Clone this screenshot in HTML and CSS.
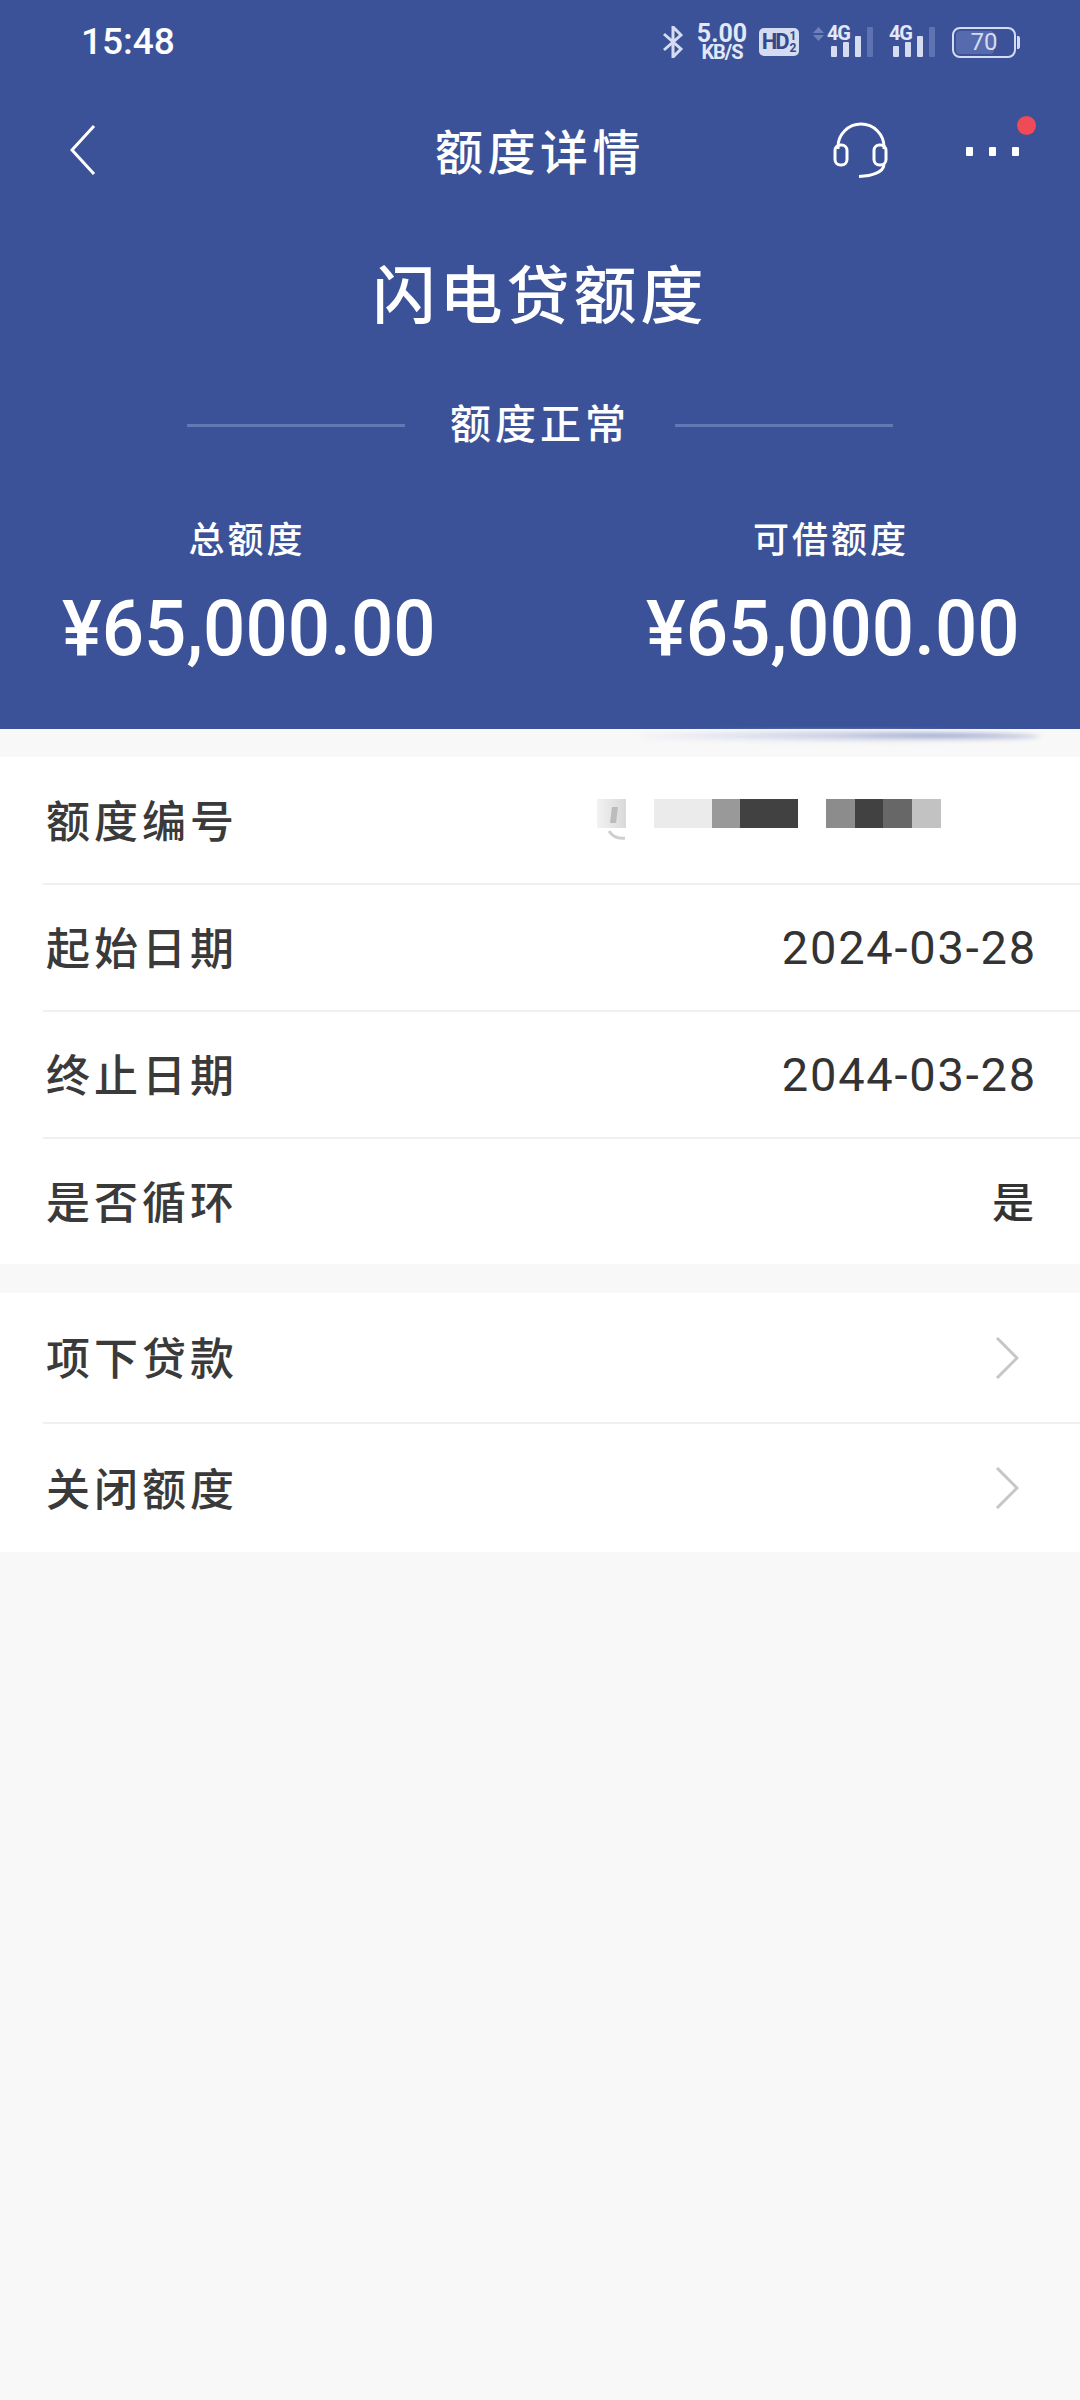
FILE: index.html
```html
<!DOCTYPE html>
<html lang="zh-CN">
<head>
<meta charset="utf-8">
<title>额度详情</title>
<link rel="stylesheet" href="styles.css">
</head>
<body>
<div class="page">
  <header class="hero">
    <div class="status">
      <span class="time">15:48</span>
      <div class="status-icons">
        <svg class="bt" width="20" height="32" viewBox="0 0 20 32"><path d="M1 8 L18 23 L10 31 V1 L18 9 L1 24" fill="none" stroke="#d5dcf2" stroke-width="3"/></svg>
        <div class="speed"><span class="speed-num">5.00</span><span class="speed-unit">KB/S</span></div>
        <div class="hd"><span>HD</span><span class="hd-frac"><i>1</i><i>2</i></span></div>
        <div class="signal">
          <svg class="updown" width="11" height="14" viewBox="0 0 11 14"><path d="M5.500 0 L11 6 H0 Z M5.500 14 L11 8 H0 Z" fill="#6d80bb"/></svg>
          <span class="net">4G</span>
          <div class="bars"><i class="b1"></i><i class="b2"></i><i class="b3"></i><i class="b4"></i></div>
        </div>
        <div class="signal signal-b">
          <span class="net">4G</span>
          <div class="bars"><i class="b1"></i><i class="b2"></i><i class="b3"></i><i class="b4"></i></div>
        </div>
        <div class="battery"><div class="cell"><div class="level"></div><span class="pct">70</span></div><i class="nub"></i></div>
      </div>
    </div>

    <nav class="nav">
      <svg class="back" width="26" height="50" viewBox="0 0 26 50"><path d="M24 1 L2 25 L24 49" fill="none" stroke="#fff" stroke-width="3"/></svg>
      <h1 class="nav-title">额度详情</h1>
      <svg class="headset" width="56" height="56" viewBox="0 0 56 56"><g fill="none" stroke="#fff" stroke-width="3"><path d="M5 27 V25 A23 23 0 0 1 51 25 V27"/><rect x="2" y="23" width="12" height="20" rx="5.500"/><rect x="41" y="23" width="12" height="20" rx="5.500"/><path d="M51 43 C50 50 40 54 26 54.500"/></g></svg>
      <div class="more"><i></i><i></i><i></i></div>
      <i class="red-dot"></i>
    </nav>

    <h2 class="product">闪电贷额度</h2>
    <div class="state"><i class="rule"></i><span>额度正常</span><i class="rule"></i></div>
    <div class="amounts">
      <div class="amount"><p class="amount-label">总额度</p><p class="amount-value">¥65,000.00</p></div>
      <div class="amount"><p class="amount-label">可借额度</p><p class="amount-value">¥65,000.00</p></div>
    </div>
  </header>

  <div class="smudge"></div>

  <section class="group group-a">
    <div class="row">
      <span class="label">额度编号</span>
      <div class="mask">
        <svg class="m-edge" width="29" height="44" viewBox="0 0 29 44">
          <defs><linearGradient id="edge"><stop offset="0" stop-color="#f2f2f2"/><stop offset="1" stop-color="#d9d9d9"/></linearGradient></defs>
          <rect width="29" height="29" fill="url(#edge)"/>
          <path d="M15 8 H21 L19 24 H13 Z" fill="#bcbcbc"/>
          <path d="M12 32 C15 37 20 40 28 39" fill="none" stroke="#d0d0d0" stroke-width="3"/>
        </svg>
        <i class="m w58 c1"></i><i class="m w28 c2"></i><i class="m w58 c4"></i>
        <i class="m-gap"></i>
        <i class="m w29 c3"></i><i class="m w28 c4"></i><i class="m w29 c5"></i><i class="m w29 c6"></i>
      </div>
    </div>
    <div class="row"><span class="label">起始日期</span><span class="value">2024-03-28</span></div>
    <div class="row"><span class="label">终止日期</span><span class="value">2044-03-28</span></div>
    <div class="row"><span class="label">是否循环</span><span class="value-cjk">是</span></div>
  </section>

  <section class="group group-b">
    <div class="row link"><span class="label">项下贷款</span><svg class="chev" width="24" height="42" viewBox="0 0 24 42"><path d="M2 1 L22 21 L2 41" fill="none" stroke="#c6c6c6" stroke-width="3"/></svg></div>
    <div class="row link"><span class="label">关闭额度</span><svg class="chev" width="24" height="42" viewBox="0 0 24 42"><path d="M2 1 L22 21 L2 41" fill="none" stroke="#c6c6c6" stroke-width="3"/></svg></div>
  </section>
</div>
</body>
</html>
```
FILE: styles.css
```css
* { box-sizing: border-box; }
html, body { margin: 0; padding: 0; }
body {
  width: 1080px;
  height: 2400px;
  background: #f8f8f8;
  font-family: "Noto Sans CJK SC", "Noto Sans", sans-serif;
  overflow: hidden;
}
.page { position: relative; width: 1080px; height: 2400px; }
p, h1, h2 { margin: 0; font-weight: 500; }
i { display: block; font-style: normal; }

.hero { height: 729px; background: #3b5299; color: #fff; overflow: hidden; }

.status { height: 84px; display: flex; justify-content: space-between; align-items: center; padding: 0 60px 0 81px; }
.time { font-family: Roboto, sans-serif; font-weight: 500; font-size: 37px; line-height: 84px; color: #fff; }
.status-icons { display: flex; align-items: center; height: 84px; }
.bt { margin-right: 14px; }
.speed { display: flex; flex-direction: column; align-items: center; width: 50px; margin-right: 12px; color: #e3e8f7; font-family: Roboto, sans-serif; font-weight: 700; }
.speed-num { font-size: 25px; line-height: 20px; }
.speed-unit { font-size: 20px; line-height: 17px; letter-spacing: -1px; }
.hd { width: 40px; height: 28px; background: #d5dcf2; border-radius: 5px; color: #34488a; display: flex; align-items: center; justify-content: center; font-family: Roboto, sans-serif; font-weight: 700; font-size: 22px; line-height: 28px; letter-spacing: -2px; margin-right: 14px; }
.hd-frac { display: flex; flex-direction: column; font-size: 12px; line-height: 12px; margin-left: 2px; letter-spacing: 0; }
.hd-frac i { display: block; }
.signal { position: relative; width: 60px; height: 32px; margin-right: 17px; }
.signal-b { width: 45px; }
.updown { position: absolute; left: 0; top: 1px; }
.net { position: absolute; right: 23px; top: -1px; font-family: Roboto, sans-serif; font-weight: 700; font-size: 20px; line-height: 17px; color: #e3e8f7; letter-spacing: -1px; }
.bars { position: absolute; right: 0; bottom: 1px; display: flex; align-items: flex-end; gap: 6px; height: 30px; }
.bars i { width: 6px; background: #d5dcf2; border-radius: 1px; }
.b1 { height: 11px; }
.b2 { height: 15px; }
.b3 { height: 21px; }
.bars .b4 { height: 30px; background: #5f73b2; }
.battery { display: flex; align-items: center; }
.cell { position: relative; width: 64px; height: 31px; border: 2.5px solid #d5dcf2; border-radius: 8px; padding: 2px; display: flex; }
.level { width: 68%; background: #566bad; border-radius: 4px; }
.pct { position: absolute; inset: 0; text-align: center; font-family: Roboto, sans-serif; font-size: 24px; line-height: 26px; color: #d5dcf2; }
.nub { width: 3px; height: 13px; background: #d5dcf2; margin-left: 1px; border-radius: 0 2px 2px 0; }

.nav { position: relative; height: 100px; display: flex; align-items: center; justify-content: center; }
.back { position: absolute; left: 70px; top: 41px; }
.nav-title { font-size: 48px; line-height: 60px; letter-spacing: 4.5px; margin-top: 30px; }
.headset { position: absolute; left: 833px; top: 38px; }
.more { position: absolute; left: 966px; top: 63px; display: flex; gap: 16px; }
.more i { width: 7px; height: 9px; background: #fff; border-radius: 1px; }
.red-dot { position: absolute; left: 1017px; top: 32px; width: 19px; height: 19px; border-radius: 50%; background: #ef4a55; }

.product { font-size: 63px; line-height: 80px; text-align: center; letter-spacing: 4px; margin-top: 67px; }
.state { display: flex; align-items: center; justify-content: center; margin-top: 60px; height: 60px; }
.state span { font-size: 41px; font-weight: 500; line-height: 60px; letter-spacing: 4px; width: 270px; text-align: center; }
.rule { width: 218px; height: 3px; background: #6478b5; margin-top: 9px; }
.amounts { display: flex; justify-content: space-between; padding: 0 64px 0 62px; margin-top: 61px; }
.amount { width: 370px; text-align: center; }
.amount-label { font-size: 36px; line-height: 50px; letter-spacing: 3px; color: #fff; }
.amount-value { font-family: Roboto, sans-serif; font-weight: 500; font-size: 77px; line-height: 90px; margin-top: 22px; white-space: nowrap; color: #fff; width: 382px; margin-left: -6px; transform: scaleX(0.968); }

.smudge { position: absolute; left: 640px; top: 731px; width: 400px; height: 11px; border-radius: 50%; background: radial-gradient(ellipse at 74% 40%, #8e9ac6 0, #c8cde2 25%, #eeeff5 65%, #f8f8f8 100%); filter: blur(2px); }

.group { background: #fff; }
.group-a { margin-top: 28px; }
.group-b { margin-top: 29px; }
.row { height: 127px; margin-left: 43px; padding: 0 43px 0 3px; display: flex; align-items: center; justify-content: space-between; border-bottom: 2px solid #f0f0f0; color: #333; }
.row:first-child { height: 128px; }
.row:last-child { border-bottom: 0; height: 125px; }
.link, .link:first-child { height: 131px; padding-right: 61px; }
.link:last-child { height: 128px; }
.label { font-size: 44px; font-weight: 500; line-height: 60px; letter-spacing: 4px; color: #3a3a3a; margin-bottom: 3px; }
.value { font-family: Roboto, sans-serif; font-size: 47px; line-height: 60px; letter-spacing: 1.8px; color: #333; }
.value-cjk { font-size: 42px; font-weight: 500; line-height: 60px; color: #333; margin-right: 3px; margin-bottom: 3px; }
.mask { position: absolute; left: 597px; top: 799px; height: 29px; display: flex; }
.m-edge { flex: none; margin-right: 28px; }
.m { height: 29px; }
.m-gap { width: 28px; }
.w58 { width: 58px; }
.w28 { width: 28px; }
.w29 { width: 29px; }
.c1 { background: #ebebeb; }
.c2 { background: #999; }
.c3 { background: #8c8c8c; }
.c4 { background: #414141; }
.c5 { background: #676767; }
.c6 { background: #c2c2c2; }
```
